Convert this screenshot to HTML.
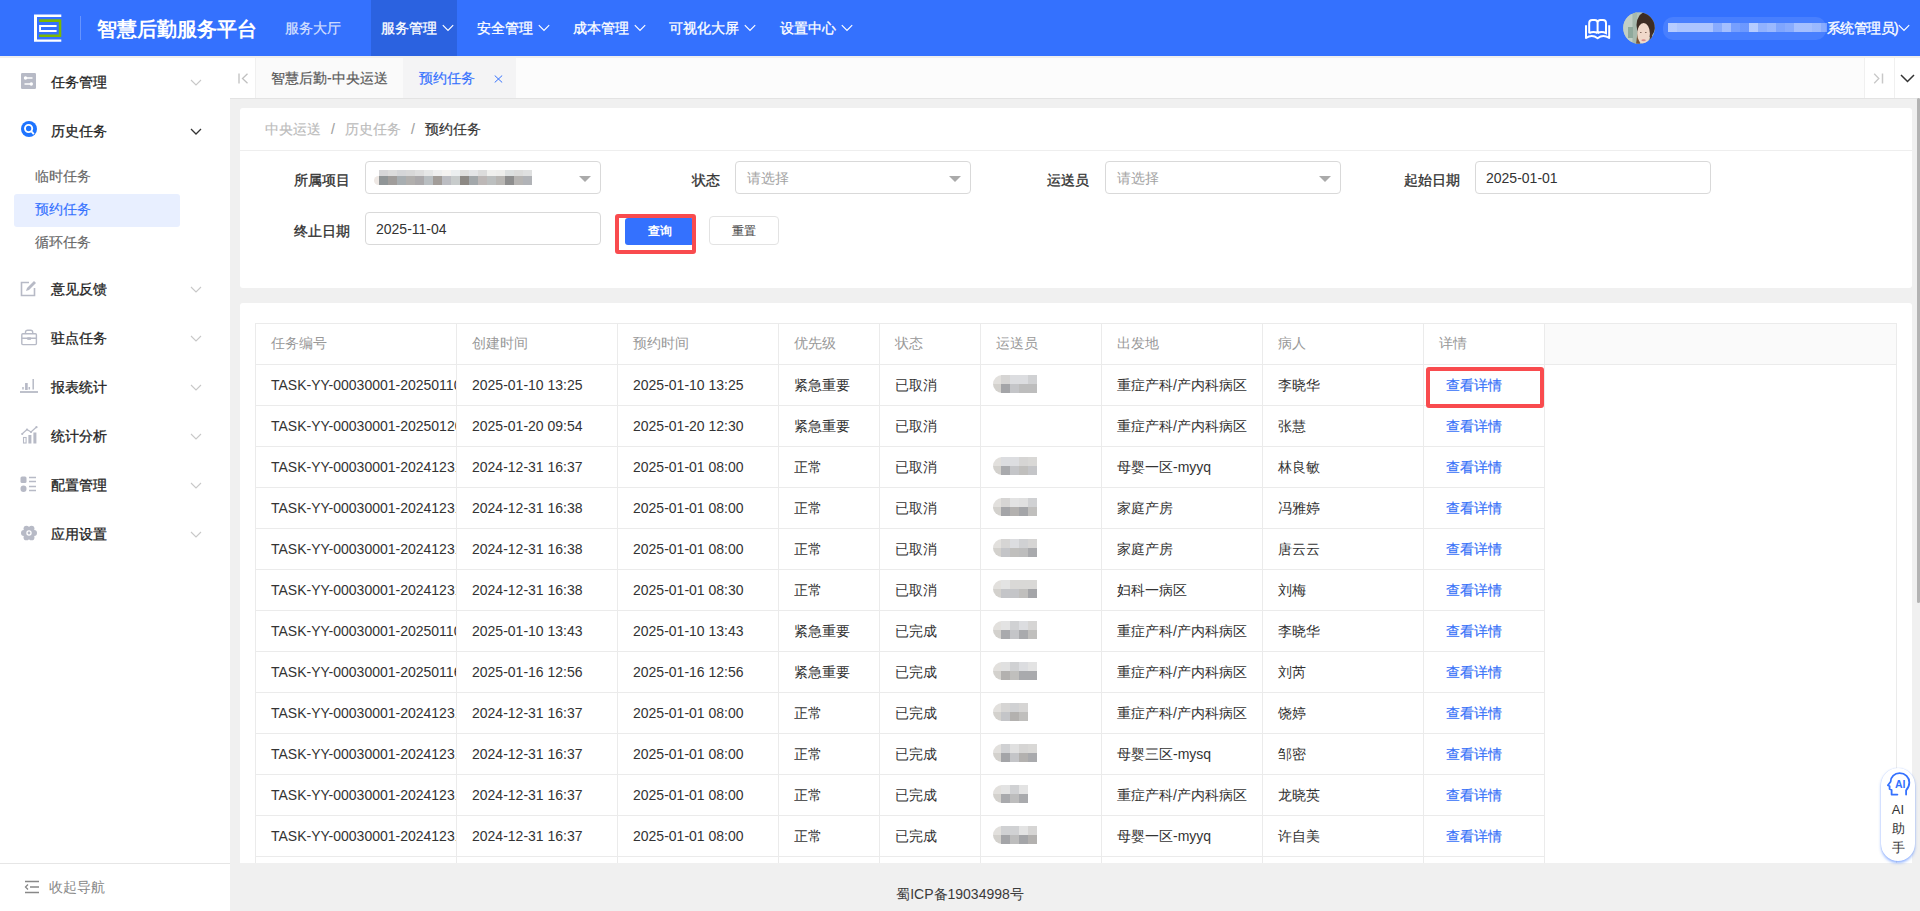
<!DOCTYPE html>
<html><head><meta charset="utf-8">
<style>
*{margin:0;padding:0;box-sizing:border-box}
html,body{width:1920px;height:911px;overflow:hidden;background:#f0f0f0;font-family:"Liberation Sans",sans-serif;color:#333}
.abs{position:absolute}
#hdr{position:absolute;left:0;top:0;width:1920px;height:56px;background:#3471fe}
#hdr .title{position:absolute;left:97px;top:15px;font-size:19.6px;color:#fff;line-height:28px;font-weight:bold}
#hdr .nav{position:absolute;top:0;height:56px;line-height:56px;font-size:14px;color:#fff;-webkit-text-stroke:0.3px #fff}
#hdr .nav svg{vertical-align:middle;margin-left:5px;margin-top:-3px}
#side{position:absolute;left:0;top:56px;width:230px;height:855px;background:#fff}
.mi{position:absolute;left:0;width:230px;height:30px;line-height:30px;font-size:14px;color:#1f1f1f;-webkit-text-stroke:0.3px #1f1f1f}
.mi .t{position:absolute;left:51px;top:1px}
.mi .ic{position:absolute;left:20px;top:7px}
.mi .ch{position:absolute;left:190px;top:13px}
.si{position:absolute;left:35px;font-size:14px;color:#666;line-height:20px;-webkit-text-stroke:0.15px #666}
#tabs{position:absolute;left:230px;top:58px;width:1690px;height:40px;background:#fcfcfc;box-shadow:0 1px 0 #e3e3e3}
#hdrsh{position:absolute;left:0;top:56px;width:1920px;height:2px;background:#efefef;z-index:5}
.card{position:absolute;background:#fff;border-radius:3px}
.lbl{position:absolute;font-size:14px;color:#333;line-height:20px;text-align:right;-webkit-text-stroke:0.35px #333}
.inp{position:absolute;height:33px;border:1px solid #d9d9d9;border-radius:4px;background:#fff;font-size:14px;line-height:31px;padding-left:10px;padding-top:1px;color:#333}
.inp.ph{padding-left:11px}
.inp.ph{color:#a3a3a3}
.inp .arr{position:absolute;right:9px;top:14px;width:0;height:0;border-left:6.5px solid transparent;border-right:6.5px solid transparent;border-top:6px solid #aaa}
table{border-collapse:collapse;table-layout:fixed}
td,th{border:1px solid #ebebeb;height:41px;font-size:14px;padding:0 0 0 15px;text-align:left;white-space:nowrap;overflow:hidden;font-weight:normal}
th{color:#999}
td{color:#333;padding-top:0}
td:nth-child(n+4){padding-top:2px}
.blur{display:inline-block;position:relative;width:44px;height:18px;vertical-align:middle;margin-left:-3px;top:-2px}.blur i{position:absolute}
td:last-child{border-top:0;border-bottom:0}
td a{color:#3570f8;text-decoration:none;-webkit-text-stroke:0.15px #3570f8}
</style></head><body>

<div id="hdr">
  <svg class="abs" style="left:0;top:0" width="100" height="56" viewBox="0 0 100 56">
    <path d="M34 14.4h27.3V17H37v22.6h24.3v2.2H34z" fill="#fff"/>
    <path d="M39.1 19.3h22.2v17.8H39.1v-2.7h19.7V22H39.1z" fill="#7cb800"/>
    <path d="M39.1 25h17.5v2H41v3h15.6v1.9H39.1z" fill="#fff"/>
  </svg>
  <div class="abs" style="left:80px;top:16px;width:1px;height:24px;background:rgba(255,255,255,.25)"></div>
  <div class="title">智慧后勤服务平台</div>
  <div class="nav" style="left:285px;color:rgba(255,255,255,.75);-webkit-text-stroke:0.3px rgba(255,255,255,.6)">服务大厅</div>
  <div class="abs" style="left:371px;top:0;width:86px;height:56px;background:#2b62e0"></div>
  <div class="nav" style="left:381px">服务管理<svg width="12" height="8" viewBox="0 0 12 8"><path d="M0.8 1.2l5.2 5.2 5.2-5.2" fill="none" stroke="#fff" stroke-width="1.2"/></svg></div>
  <div class="nav" style="left:477px">安全管理<svg width="12" height="8" viewBox="0 0 12 8"><path d="M0.8 1.2l5.2 5.2 5.2-5.2" fill="none" stroke="#fff" stroke-width="1.2"/></svg></div>
  <div class="nav" style="left:573px">成本管理<svg width="12" height="8" viewBox="0 0 12 8"><path d="M0.8 1.2l5.2 5.2 5.2-5.2" fill="none" stroke="#fff" stroke-width="1.2"/></svg></div>
  <div class="nav" style="left:669px">可视化大屏<svg width="12" height="8" viewBox="0 0 12 8"><path d="M0.8 1.2l5.2 5.2 5.2-5.2" fill="none" stroke="#fff" stroke-width="1.2"/></svg></div>
  <div class="nav" style="left:780px">设置中心<svg width="12" height="8" viewBox="0 0 12 8"><path d="M0.8 1.2l5.2 5.2 5.2-5.2" fill="none" stroke="#fff" stroke-width="1.2"/></svg></div>
  <!-- book -->
  <svg class="abs" style="left:1580px;top:9px" width="40" height="40" viewBox="0 0 40 40"><path d="M9.2 24.2V14a3 3 0 0 1 3-3h2.6a2.8 2.8 0 0 1 2.8 2.8V24.2M9.2 24.2Q13.4 22 17.6 24.2M17.6 24.2V13.8a2.8 2.8 0 0 1 2.8-2.8h2.6a3 3 0 0 1 3 3V24.2Q21.8 22 17.6 24.2" fill="none" stroke="#fff" stroke-width="2"/><path d="M6 16.2V29Q12 25 17.6 29.2Q23.2 25 29.2 29V16.2" fill="none" stroke="#fff" stroke-width="2" stroke-linejoin="round"/></svg>
  <svg class="abs" style="left:1623px;top:12px" width="32" height="32" viewBox="0 0 32 32"><defs><clipPath id="av"><circle cx="16" cy="16" r="15.8"/></clipPath></defs><g clip-path="url(#av)"><rect width="32" height="32" fill="#b3c3b8"/><rect x="0" y="0" width="9" height="32" fill="#c2cfc6"/><rect x="5" y="15" width="8" height="11" fill="#8fa99c"/><rect x="10" y="0" width="4" height="32" fill="#a7b9ad"/><ellipse cx="23" cy="13" rx="9.5" ry="13" fill="#3d2d24"/><path d="M15.5 14 L13 32 L17 32 Z" fill="#7a5638"/><path d="M28 18 L31 32 L26 32 Z" fill="#4a3428"/><ellipse cx="20.6" cy="21.5" rx="6.3" ry="10.5" fill="#f0d9ca"/><ellipse cx="20.6" cy="28.2" rx="2.2" ry="1" fill="#d88f8c"/><ellipse cx="17.8" cy="20.5" rx="0.9" ry="0.6" fill="#7a6052"/><ellipse cx="22.8" cy="20.5" rx="0.9" ry="0.6" fill="#7a6052"/></g></svg>
  <div class="abs" style="left:1663px;top:17px;width:163px;height:23px;background:rgba(255,255,255,.1);border-radius:10px"></div><div class="abs" style="left:1668px;top:23px;width:159px;height:9px;background:linear-gradient(90deg,rgba(255,255,255,0.60) 0px,rgba(255,255,255,0.60) 9px,rgba(255,255,255,0.55) 9px,rgba(255,255,255,0.55) 18px,rgba(255,255,255,0.55) 18px,rgba(255,255,255,0.55) 27px,rgba(255,255,255,0.55) 27px,rgba(255,255,255,0.55) 36px,rgba(255,255,255,0.55) 36px,rgba(255,255,255,0.55) 45px,rgba(255,255,255,0.35) 45px,rgba(255,255,255,0.35) 54px,rgba(255,255,255,0.50) 54px,rgba(255,255,255,0.50) 63px,rgba(255,255,255,0.25) 63px,rgba(255,255,255,0.25) 72px,rgba(255,255,255,0.20) 72px,rgba(255,255,255,0.20) 81px,rgba(255,255,255,0.60) 81px,rgba(255,255,255,0.60) 90px,rgba(255,255,255,0.40) 90px,rgba(255,255,255,0.40) 99px,rgba(255,255,255,0.45) 99px,rgba(255,255,255,0.45) 108px,rgba(255,255,255,0.30) 108px,rgba(255,255,255,0.30) 117px,rgba(255,255,255,0.35) 117px,rgba(255,255,255,0.35) 126px,rgba(255,255,255,0.50) 126px,rgba(255,255,255,0.50) 135px,rgba(255,255,255,0.50) 135px,rgba(255,255,255,0.50) 144px,rgba(255,255,255,0.45) 144px,rgba(255,255,255,0.45) 153px,rgba(255,255,255,0.35) 153px,rgba(255,255,255,0.35) 162px)"></div>
  <div class="nav" style="left:1827px;letter-spacing:-0.6px">系统管理员)<svg style="margin-left:0" width="12" height="8" viewBox="0 0 12 8"><path d="M0.8 1.2l5.2 5.2 5.2-5.2" fill="none" stroke="#fff" stroke-width="1.2"/></svg></div>
</div>

<div id="hdrsh"></div>
<div id="side">
  <div class="mi" style="top:10px"><svg class="ic" style="left:21px" width="15" height="16" viewBox="0 0 15 16"><rect x="0" y="0" width="15" height="16" rx="1.2" fill="#b7bac6"/><path d="M4 5h7.5M3.5 11h7" stroke="#fff" stroke-width="1.3"/><circle cx="4.5" cy="5" r="1.7" fill="#fff"/><circle cx="10.3" cy="11" r="1.7" fill="#fff"/></svg><span class="t">任务管理</span><svg class="ch" width="12" height="7" viewBox="0 0 12 7"><path d="M1 1l5 5 5-5" fill="none" stroke="#c8c8c8" stroke-width="1.1"/></svg></div>
  <div class="mi" style="top:59px"><svg class="ic" style="left:21px;top:6px" width="16" height="16" viewBox="0 0 16 16"><circle cx="8" cy="8" r="8" fill="#1e74ff"/><circle cx="7.6" cy="7.5" r="3.6" fill="none" stroke="#fff" stroke-width="1.9"/><path d="M10.2 10.2l2.6 3" stroke="#fff" stroke-width="1.8"/></svg><span class="t">历史任务</span><svg class="ch" width="12" height="7" viewBox="0 0 12 7"><path d="M1 1l5 5 5-5" fill="none" stroke="#333" stroke-width="1.3"/></svg></div>
  <div class="si" style="top:110px">临时任务</div>
  <div class="abs" style="left:14px;top:138px;width:166px;height:33px;background:#e8efff;border-radius:3px"></div>
  <div class="si" style="top:143px;color:#3471fe;-webkit-text-stroke:0.15px #3471fe">预约任务</div>
  <div class="si" style="top:176px">循环任务</div>
  <div class="mi" style="top:217px"><svg class="ic" width="17" height="17" viewBox="0 0 17 17"><path d="M9 2.5H1.5v13h13V8" fill="none" stroke="#b7bac6" stroke-width="1.6"/><path d="M6 11l1-3 7-7 2 2-7 7z" fill="#b7bac6"/></svg><span class="t">意见反馈</span><svg class="ch" width="12" height="7" viewBox="0 0 12 7"><path d="M1 1l5 5 5-5" fill="none" stroke="#c8c8c8" stroke-width="1.1"/></svg></div>
  <div class="mi" style="top:266px"><svg class="ic" style="left:21px;top:7px" width="17" height="17" viewBox="0 0 17 17"><rect x="0.8" y="4.8" width="14.6" height="10.8" rx="1" fill="none" stroke="#b7bac6" stroke-width="1.4"/><path d="M4.5 4.8V3.2a2 2 0 0 1 2-2h3.2a2 2 0 0 1 2 2v1.6M0.8 9.2h14.6" fill="none" stroke="#b7bac6" stroke-width="1.4"/><rect x="6.3" y="8.3" width="3.6" height="2.6" fill="#b7bac6"/></svg><span class="t">驻点任务</span><svg class="ch" width="12" height="7" viewBox="0 0 12 7"><path d="M1 1l5 5 5-5" fill="none" stroke="#c8c8c8" stroke-width="1.1"/></svg></div>
  <div class="mi" style="top:315px"><svg class="ic" style="left:20px;top:5px" width="18" height="17" viewBox="0 0 18 17"><path d="M0 16h18" stroke="#b7bac6" stroke-width="1.8"/><path d="M3 13.5V11M6.3 13.5V7.5M9.3 13.5V11M13.2 13.5V3" stroke="#b7bac6" stroke-width="1.5"/><rect x="5.6" y="7.5" width="1.6" height="6" fill="none" stroke="#b7bac6" stroke-width="1"/></svg><span class="t">报表统计</span><svg class="ch" width="12" height="7" viewBox="0 0 12 7"><path d="M1 1l5 5 5-5" fill="none" stroke="#c8c8c8" stroke-width="1.1"/></svg></div>
  <div class="mi" style="top:364px"><svg class="ic" style="left:21px;top:6px" width="17" height="18" viewBox="0 0 17 18"><path d="M1 8l5-4.5 4 2.5 5.5-5" fill="none" stroke="#b7bac6" stroke-width="1.2"/><circle cx="1.2" cy="8" r="1.1" fill="#b7bac6"/><circle cx="6" cy="3.5" r="1.1" fill="#b7bac6"/><circle cx="10" cy="6" r="1.1" fill="#b7bac6"/><circle cx="15.5" cy="1.2" r="1.1" fill="#b7bac6"/><rect x="2.5" y="11.5" width="2.6" height="5.5" fill="none" stroke="#b7bac6" stroke-width="1.1"/><rect x="7.4" y="9" width="3" height="8.5" fill="#b7bac6"/><rect x="12.4" y="6.5" width="3" height="11" fill="#b7bac6"/></svg><span class="t">统计分析</span><svg class="ch" width="12" height="7" viewBox="0 0 12 7"><path d="M1 1l5 5 5-5" fill="none" stroke="#c8c8c8" stroke-width="1.1"/></svg></div>
  <div class="mi" style="top:413px"><svg class="ic" width="17" height="17" viewBox="0 0 17 17"><rect x="0.5" y="0.5" width="6" height="6.5" rx="1.5" fill="#b7bac6"/><rect x="0.5" y="9.5" width="6" height="6.5" rx="3" fill="#b7bac6"/><path d="M9 1.5h7M9 5.5h7M9 10.5h7M9 14.5h7" stroke="#b7bac6" stroke-width="1.6"/></svg><span class="t">配置管理</span><svg class="ch" width="12" height="7" viewBox="0 0 12 7"><path d="M1 1l5 5 5-5" fill="none" stroke="#c8c8c8" stroke-width="1.1"/></svg></div>
  <div class="mi" style="top:462px"><svg class="ic" style="left:21px;top:7px" width="16" height="16" viewBox="0 0 16 16"><circle cx="8" cy="8" r="5.6" fill="#b7bac6"/><circle cx="13.10" cy="8.00" r="2.9" fill="#b7bac6"/><circle cx="10.55" cy="12.42" r="2.9" fill="#b7bac6"/><circle cx="5.45" cy="12.42" r="2.9" fill="#b7bac6"/><circle cx="2.90" cy="8.00" r="2.9" fill="#b7bac6"/><circle cx="5.45" cy="3.58" r="2.9" fill="#b7bac6"/><circle cx="10.55" cy="3.58" r="2.9" fill="#b7bac6"/><circle cx="8" cy="8" r="2.7" fill="#fff"/><circle cx="8" cy="8" r="1.4" fill="#b7bac6"/></svg><span class="t">应用设置</span><svg class="ch" width="12" height="7" viewBox="0 0 12 7"><path d="M1 1l5 5 5-5" fill="none" stroke="#c8c8c8" stroke-width="1.1"/></svg></div>
  <div class="abs" style="left:0;top:807px;width:230px;height:1px;background:#e6e6e6"></div>
  <svg class="abs" style="left:24px;top:824px" width="16" height="14" viewBox="0 0 16 14"><path d="M1 1.5h14M6 7h9M1 12.5h14" stroke="#888" stroke-width="1.5"/><path d="M4 4.5L1.5 7 4 9.5" fill="none" stroke="#888" stroke-width="1.3"/></svg>
  <div class="abs" style="left:49px;top:821px;font-size:14px;color:#888;line-height:20px">收起导航</div>
</div>

<div id="tabs">
  <div class="abs" style="left:0;top:0;width:26px;height:40px;background:#fff;border-right:1px solid #f0f0f0"></div>
  <div class="abs" style="left:26px;top:0;width:147px;height:40px;background:#fafafa"></div>
  <svg class="abs" style="left:8px;top:15px" width="11" height="11" viewBox="0 0 11 11"><path d="M1 0.5v10" stroke="#c0c0c0" stroke-width="1.3"/><path d="M9.5 0.8L4.5 5.5l5 4.7" fill="none" stroke="#c0c0c0" stroke-width="1.3"/></svg>
  <div class="abs" style="left:41px;top:10px;font-size:14px;color:#595959;line-height:20px;-webkit-text-stroke:0.2px #595959">智慧后勤-中央运送</div>
  <div class="abs" style="left:173px;top:0;width:113px;height:40px;background:#f4f4f5"></div>
  <div class="abs" style="left:189px;top:10px;font-size:14px;color:#3471fe;line-height:20px;-webkit-text-stroke:0.2px #3471fe">预约任务</div>
  <svg class="abs" style="left:264px;top:17px" width="9" height="8" viewBox="0 0 9 8"><path d="M0.7 0.5l7.5 7M8.2 0.5L0.7 7.5" stroke="#3471fe" stroke-width="1"/></svg>
  <div class="abs" style="left:1634px;top:0;width:31px;height:40px;background:#fff;border-left:1px solid #f0f0f0;border-right:1px solid #f0f0f0"></div>
  <div class="abs" style="left:1665px;top:0;width:25px;height:40px;background:#fff"></div>
  <svg class="abs" style="left:1643px;top:15px" width="11" height="11" viewBox="0 0 11 11"><path d="M9.5 0.5v10" stroke="#c8c8c8" stroke-width="1.5"/><path d="M1.2 0.8L5.8 5.5l-4.6 4.7" fill="none" stroke="#c8c8c8" stroke-width="1.3"/></svg>
  <svg class="abs" style="left:1670px;top:16px" width="15" height="9" viewBox="0 0 15 9"><path d="M1 1l6.5 6.5L14 1" fill="none" stroke="#333" stroke-width="1.5"/></svg>
</div>

<div class="card" style="left:240px;top:108px;width:1672px;height:180px">
  <div class="abs" style="left:25px;top:11px;font-size:14px;line-height:20px;color:#bbb;-webkit-text-stroke:0.15px #bbb">中央运送<span style="margin:0 10px;color:#999">/</span>历史任务<span style="margin:0 10px;color:#999">/</span><span style="color:#333;-webkit-text-stroke:0.2px #333">预约任务</span></div>
  <div class="abs" style="left:0;top:42px;width:1672px;height:1px;background:#eee"></div>
  <div class="lbl" style="left:40px;top:62px;width:70px">所属项目</div>
  <div class="inp" style="left:125px;top:53px;width:236px"><div class="abs" style="left:13px;top:8px;width:153px;height:6px;background:linear-gradient(90deg,#d6d6d8 0px,#d6d6d8 9px,#dcdcdc 9px,#dcdcdc 18px,#d5d6d8 18px,#d5d6d8 27px,#d8d8d8 27px,#d8d8d8 36px,#dedede 36px,#dedede 45px,#e6e7e7 45px,#e6e7e7 54px,#efefef 54px,#efefef 63px,#f5f3f1 63px,#f5f3f1 72px,#eceff0 72px,#eceff0 81px,#e0dfdd 81px,#e0dfdd 90px,#e4e5e7 90px,#e4e5e7 99px,#dcdcdc 99px,#dcdcdc 108px,#f0f0ee 108px,#f0f0ee 117px,#eeeeec 117px,#eeeeec 126px,#dde0e0 126px,#dde0e0 135px,#dcdcdb 135px,#dcdcdb 144px,#dfe0e0 144px,#dfe0e0 153px)"></div><div class="abs" style="left:13px;top:14px;width:153px;height:9px;background:linear-gradient(90deg,#909597 0px,#909597 9px,#a09d9b 9px,#a09d9b 18px,#a8aeb1 18px,#a8aeb1 27px,#b1afad 27px,#b1afad 36px,#aba9ab 36px,#aba9ab 45px,#b9bec1 45px,#b9bec1 54px,#a29d99 54px,#a29d99 63px,#bcbdc2 63px,#bcbdc2 72px,#c8cccc 72px,#c8cccc 81px,#8d8984 81px,#8d8984 90px,#a3a8ab 90px,#a3a8ab 99px,#bdb8b7 99px,#bdb8b7 108px,#bcbfbf 108px,#bcbfbf 117px,#b8b6b3 117px,#b8b6b3 126px,#8e8e8e 126px,#8e8e8e 135px,#b6b4b2 135px,#b6b4b2 144px,#b1b3b7 144px,#b1b3b7 153px)"></div><div class="abs" style="left:8px;top:14px;width:5px;height:9px;background:#eee8e4;border-radius:5px 0 0 5px"></div><div class="arr"></div></div>
  <div class="lbl" style="left:410px;top:62px;width:70px">状态</div>
  <div class="inp ph" style="left:495px;top:53px;width:236px">请选择<div class="arr"></div></div>
  <div class="lbl" style="left:779px;top:62px;width:70px">运送员</div>
  <div class="inp ph" style="left:865px;top:53px;width:236px">请选择<div class="arr"></div></div>
  <div class="lbl" style="left:1150px;top:62px;width:70px">起始日期</div>
  <div class="inp" style="left:1235px;top:53px;width:236px">2025-01-01</div>
  <div class="lbl" style="left:40px;top:113px;width:70px">终止日期</div>
  <div class="inp" style="left:125px;top:104px;width:236px">2025-11-04</div>
  <div class="abs" style="left:385px;top:110px;width:69px;height:27px;background:#3471fe;border-radius:3px;color:#fff;font-size:12px;line-height:27px;text-align:center;font-weight:bold">查询</div>
  <div class="abs" style="left:375px;top:106px;width:81px;height:40px;border:4px solid #f94b4e;border-radius:3px"></div>
  <div class="abs" style="left:469px;top:108px;width:70px;height:29px;border:1px solid #e3e3e3;border-radius:4px;background:#fff;color:#505050;font-size:12px;line-height:29px;text-align:center;-webkit-text-stroke:0.15px #505050">重置</div>
</div>

<div class="card" style="left:240px;top:303px;width:1672px;height:560px;overflow:hidden;border-radius:3px 3px 0 0">
<table class="abs" style="left:15px;top:20px;width:1641px">
<colgroup><col style="width:201px"><col style="width:161px"><col style="width:161px"><col style="width:101px"><col style="width:101px"><col style="width:121px"><col style="width:161px"><col style="width:161px"><col style="width:121px"><col style="width:352px"></colgroup>
<tr><th>任务编号</th><th>创建时间</th><th>预约时间</th><th>优先级</th><th>状态</th><th>运送员</th><th>出发地</th><th>病人</th><th>详情</th><th style="background:#fafafa"></th></tr>
<tr><td style="padding-right:0">TASK-YY-00030001-20250110</td><td>2025-01-10 13:25</td><td>2025-01-10 13:25</td><td>紧急重要</td><td>已取消</td><td><span class="blur"><i style="left:0;top:0;width:9px;height:9px;background:#e2e0dd;border-top-left-radius:9px"></i><i style="left:0;top:9px;width:9px;height:9px;background:#d3d1cd;border-bottom-left-radius:9px"></i><i style="left:8px;top:0;width:9px;height:9px;background:#d6d5d4"></i><i style="left:8px;top:9px;width:9px;height:9px;background:#a4a5a8"></i><i style="left:17px;top:0;width:9px;height:9px;background:#dcdde0"></i><i style="left:17px;top:9px;width:9px;height:9px;background:#c4c5c8"></i><i style="left:26px;top:0;width:9px;height:9px;background:#dcdde0"></i><i style="left:26px;top:9px;width:9px;height:9px;background:#bdbdbd"></i><i style="left:35px;top:0;width:9px;height:9px;background:#d0d1d3"></i><i style="left:35px;top:9px;width:9px;height:9px;background:#bdbdbd"></i></span></td><td>重症产科/产内科病区</td><td>李晓华</td><td style="padding-left:22px"><a>查看详情</a></td><td></td></tr>
<tr><td style="padding-right:0">TASK-YY-00030001-20250120</td><td>2025-01-20 09:54</td><td>2025-01-20 12:30</td><td>紧急重要</td><td>已取消</td><td></td><td>重症产科/产内科病区</td><td>张慧</td><td style="padding-left:22px"><a>查看详情</a></td><td></td></tr>
<tr><td style="padding-right:0">TASK-YY-00030001-20241231</td><td>2024-12-31 16:37</td><td>2025-01-01 08:00</td><td>正常</td><td>已取消</td><td><span class="blur"><i style="left:0;top:0;width:9px;height:9px;background:#e2e0dd;border-top-left-radius:9px"></i><i style="left:0;top:9px;width:9px;height:9px;background:#d3d1cd;border-bottom-left-radius:9px"></i><i style="left:8px;top:0;width:9px;height:9px;background:#dcdde0"></i><i style="left:8px;top:9px;width:9px;height:9px;background:#a9aaad"></i><i style="left:17px;top:0;width:9px;height:9px;background:#dcdde0"></i><i style="left:17px;top:9px;width:9px;height:9px;background:#c4c5c8"></i><i style="left:26px;top:0;width:9px;height:9px;background:#d6d5d4"></i><i style="left:26px;top:9px;width:9px;height:9px;background:#c0bfbd"></i><i style="left:35px;top:0;width:9px;height:9px;background:#d9d8d6"></i><i style="left:35px;top:9px;width:9px;height:9px;background:#c4c5c8"></i></span></td><td>母婴一区-myyq</td><td>林良敏</td><td style="padding-left:22px"><a>查看详情</a></td><td></td></tr>
<tr><td style="padding-right:0">TASK-YY-00030001-20241231</td><td>2024-12-31 16:38</td><td>2025-01-01 08:00</td><td>正常</td><td>已取消</td><td><span class="blur"><i style="left:0;top:0;width:9px;height:9px;background:#e2e0dd;border-top-left-radius:9px"></i><i style="left:0;top:9px;width:9px;height:9px;background:#d3d1cd;border-bottom-left-radius:9px"></i><i style="left:8px;top:0;width:9px;height:9px;background:#d6d5d4"></i><i style="left:8px;top:9px;width:9px;height:9px;background:#a4a5a8"></i><i style="left:17px;top:0;width:9px;height:9px;background:#e3e3e3"></i><i style="left:17px;top:9px;width:9px;height:9px;background:#b3b1af"></i><i style="left:26px;top:0;width:9px;height:9px;background:#e0e0e0"></i><i style="left:26px;top:9px;width:9px;height:9px;background:#a4a5a8"></i><i style="left:35px;top:0;width:9px;height:9px;background:#d0d1d3"></i><i style="left:35px;top:9px;width:9px;height:9px;background:#c0bfbd"></i></span></td><td>家庭产房</td><td>冯雅婷</td><td style="padding-left:22px"><a>查看详情</a></td><td></td></tr>
<tr><td style="padding-right:0">TASK-YY-00030001-20241231</td><td>2024-12-31 16:38</td><td>2025-01-01 08:00</td><td>正常</td><td>已取消</td><td><span class="blur"><i style="left:0;top:0;width:9px;height:9px;background:#e2e0dd;border-top-left-radius:9px"></i><i style="left:0;top:9px;width:9px;height:9px;background:#d3d1cd;border-bottom-left-radius:9px"></i><i style="left:8px;top:0;width:9px;height:9px;background:#d6d5d4"></i><i style="left:8px;top:9px;width:9px;height:9px;background:#c4c5c8"></i><i style="left:17px;top:0;width:9px;height:9px;background:#dcdde0"></i><i style="left:17px;top:9px;width:9px;height:9px;background:#c0bfbd"></i><i style="left:26px;top:0;width:9px;height:9px;background:#d0d1d3"></i><i style="left:26px;top:9px;width:9px;height:9px;background:#bdbdbd"></i><i style="left:35px;top:0;width:9px;height:9px;background:#d6d5d4"></i><i style="left:35px;top:9px;width:9px;height:9px;background:#a9aaad"></i></span></td><td>家庭产房</td><td>唐云云</td><td style="padding-left:22px"><a>查看详情</a></td><td></td></tr>
<tr><td style="padding-right:0">TASK-YY-00030001-20241231</td><td>2024-12-31 16:38</td><td>2025-01-01 08:30</td><td>正常</td><td>已取消</td><td><span class="blur"><i style="left:0;top:0;width:9px;height:9px;background:#e2e0dd;border-top-left-radius:9px"></i><i style="left:0;top:9px;width:9px;height:9px;background:#d3d1cd;border-bottom-left-radius:9px"></i><i style="left:8px;top:0;width:9px;height:9px;background:#e3e3e3"></i><i style="left:8px;top:9px;width:9px;height:9px;background:#c4c5c8"></i><i style="left:17px;top:0;width:9px;height:9px;background:#d9d8d6"></i><i style="left:17px;top:9px;width:9px;height:9px;background:#c4c5c8"></i><i style="left:26px;top:0;width:9px;height:9px;background:#d9d8d6"></i><i style="left:26px;top:9px;width:9px;height:9px;background:#c0bfbd"></i><i style="left:35px;top:0;width:9px;height:9px;background:#d9d8d6"></i><i style="left:35px;top:9px;width:9px;height:9px;background:#a4a5a8"></i></span></td><td>妇科一病区</td><td>刘梅</td><td style="padding-left:22px"><a>查看详情</a></td><td></td></tr>
<tr><td style="padding-right:0">TASK-YY-00030001-20250110</td><td>2025-01-10 13:43</td><td>2025-01-10 13:43</td><td>紧急重要</td><td>已完成</td><td><span class="blur"><i style="left:0;top:0;width:9px;height:9px;background:#e2e0dd;border-top-left-radius:9px"></i><i style="left:0;top:9px;width:9px;height:9px;background:#d3d1cd;border-bottom-left-radius:9px"></i><i style="left:8px;top:0;width:9px;height:9px;background:#e3e3e3"></i><i style="left:8px;top:9px;width:9px;height:9px;background:#a9aaad"></i><i style="left:17px;top:0;width:9px;height:9px;background:#d0d1d3"></i><i style="left:17px;top:9px;width:9px;height:9px;background:#c4c5c8"></i><i style="left:26px;top:0;width:9px;height:9px;background:#dcdde0"></i><i style="left:26px;top:9px;width:9px;height:9px;background:#a9aaad"></i><i style="left:35px;top:0;width:9px;height:9px;background:#d6d5d4"></i><i style="left:35px;top:9px;width:9px;height:9px;background:#c0bfbd"></i></span></td><td>重症产科/产内科病区</td><td>李晓华</td><td style="padding-left:22px"><a>查看详情</a></td><td></td></tr>
<tr><td style="padding-right:0">TASK-YY-00030001-20250116</td><td>2025-01-16 12:56</td><td>2025-01-16 12:56</td><td>紧急重要</td><td>已完成</td><td><span class="blur"><i style="left:0;top:0;width:9px;height:9px;background:#e2e0dd;border-top-left-radius:9px"></i><i style="left:0;top:9px;width:9px;height:9px;background:#d3d1cd;border-bottom-left-radius:9px"></i><i style="left:8px;top:0;width:9px;height:9px;background:#e0e0e0"></i><i style="left:8px;top:9px;width:9px;height:9px;background:#b3b1af"></i><i style="left:17px;top:0;width:9px;height:9px;background:#d0d1d3"></i><i style="left:17px;top:9px;width:9px;height:9px;background:#c0bfbd"></i><i style="left:26px;top:0;width:9px;height:9px;background:#dcdde0"></i><i style="left:26px;top:9px;width:9px;height:9px;background:#a9aaad"></i><i style="left:35px;top:0;width:9px;height:9px;background:#e3e3e3"></i><i style="left:35px;top:9px;width:9px;height:9px;background:#a9aaad"></i></span></td><td>重症产科/产内科病区</td><td>刘芮</td><td style="padding-left:22px"><a>查看详情</a></td><td></td></tr>
<tr><td style="padding-right:0">TASK-YY-00030001-20241231</td><td>2024-12-31 16:37</td><td>2025-01-01 08:00</td><td>正常</td><td>已完成</td><td><span class="blur" style="width:35px"><i style="left:0;top:0;width:9px;height:9px;background:#e2e0dd;border-top-left-radius:9px"></i><i style="left:0;top:9px;width:9px;height:9px;background:#d3d1cd;border-bottom-left-radius:9px"></i><i style="left:8px;top:0;width:9px;height:9px;background:#d6d5d4"></i><i style="left:8px;top:9px;width:9px;height:9px;background:#c4c5c8"></i><i style="left:17px;top:0;width:9px;height:9px;background:#d0d1d3"></i><i style="left:17px;top:9px;width:9px;height:9px;background:#b3b1af"></i><i style="left:26px;top:0;width:9px;height:9px;background:#d6d5d4"></i><i style="left:26px;top:9px;width:9px;height:9px;background:#c0bfbd"></i></span></td><td>重症产科/产内科病区</td><td>饶婷</td><td style="padding-left:22px"><a>查看详情</a></td><td></td></tr>
<tr><td style="padding-right:0">TASK-YY-00030001-20241231</td><td>2024-12-31 16:37</td><td>2025-01-01 08:00</td><td>正常</td><td>已完成</td><td><span class="blur"><i style="left:0;top:0;width:9px;height:9px;background:#e2e0dd;border-top-left-radius:9px"></i><i style="left:0;top:9px;width:9px;height:9px;background:#d3d1cd;border-bottom-left-radius:9px"></i><i style="left:8px;top:0;width:9px;height:9px;background:#d0d1d3"></i><i style="left:8px;top:9px;width:9px;height:9px;background:#a4a5a8"></i><i style="left:17px;top:0;width:9px;height:9px;background:#e0e0e0"></i><i style="left:17px;top:9px;width:9px;height:9px;background:#c4c5c8"></i><i style="left:26px;top:0;width:9px;height:9px;background:#d6d5d4"></i><i style="left:26px;top:9px;width:9px;height:9px;background:#b3b1af"></i><i style="left:35px;top:0;width:9px;height:9px;background:#d9d8d6"></i><i style="left:35px;top:9px;width:9px;height:9px;background:#a9aaad"></i></span></td><td>母婴三区-mysq</td><td>邹密</td><td style="padding-left:22px"><a>查看详情</a></td><td></td></tr>
<tr><td style="padding-right:0">TASK-YY-00030001-20241231</td><td>2024-12-31 16:37</td><td>2025-01-01 08:00</td><td>正常</td><td>已完成</td><td><span class="blur" style="width:35px"><i style="left:0;top:0;width:9px;height:9px;background:#e2e0dd;border-top-left-radius:9px"></i><i style="left:0;top:9px;width:9px;height:9px;background:#d3d1cd;border-bottom-left-radius:9px"></i><i style="left:8px;top:0;width:9px;height:9px;background:#e3e3e3"></i><i style="left:8px;top:9px;width:9px;height:9px;background:#a9aaad"></i><i style="left:17px;top:0;width:9px;height:9px;background:#d0d1d3"></i><i style="left:17px;top:9px;width:9px;height:9px;background:#bdbdbd"></i><i style="left:26px;top:0;width:9px;height:9px;background:#e3e3e3"></i><i style="left:26px;top:9px;width:9px;height:9px;background:#a9aaad"></i></span></td><td>重症产科/产内科病区</td><td>龙晓英</td><td style="padding-left:22px"><a>查看详情</a></td><td></td></tr>
<tr><td style="padding-right:0">TASK-YY-00030001-20241231</td><td>2024-12-31 16:37</td><td>2025-01-01 08:00</td><td>正常</td><td>已完成</td><td><span class="blur"><i style="left:0;top:0;width:9px;height:9px;background:#e2e0dd;border-top-left-radius:9px"></i><i style="left:0;top:9px;width:9px;height:9px;background:#d3d1cd;border-bottom-left-radius:9px"></i><i style="left:8px;top:0;width:9px;height:9px;background:#d0d1d3"></i><i style="left:8px;top:9px;width:9px;height:9px;background:#a4a5a8"></i><i style="left:17px;top:0;width:9px;height:9px;background:#d0d1d3"></i><i style="left:17px;top:9px;width:9px;height:9px;background:#bdbdbd"></i><i style="left:26px;top:0;width:9px;height:9px;background:#e3e3e3"></i><i style="left:26px;top:9px;width:9px;height:9px;background:#a4a5a8"></i><i style="left:35px;top:0;width:9px;height:9px;background:#d6d5d4"></i><i style="left:35px;top:9px;width:9px;height:9px;background:#b3b1af"></i></span></td><td>母婴一区-myyq</td><td>许自美</td><td style="padding-left:22px"><a>查看详情</a></td><td></td></tr>
<tr><td style="padding-right:0">TASK-YY-00030001-20241231</td><td>2024-12-31 16:37</td><td>2025-01-01 08:00</td><td>正常</td><td>已完成</td><td><span class="blur"><i style="left:0;top:0;width:9px;height:9px;background:#e2e0dd;border-top-left-radius:9px"></i><i style="left:0;top:9px;width:9px;height:9px;background:#d3d1cd;border-bottom-left-radius:9px"></i><i style="left:8px;top:0;width:9px;height:9px;background:#d0d1d3"></i><i style="left:8px;top:9px;width:9px;height:9px;background:#c4c5c8"></i><i style="left:17px;top:0;width:9px;height:9px;background:#d9d8d6"></i><i style="left:17px;top:9px;width:9px;height:9px;background:#a4a5a8"></i><i style="left:26px;top:0;width:9px;height:9px;background:#d9d8d6"></i><i style="left:26px;top:9px;width:9px;height:9px;background:#c4c5c8"></i><i style="left:35px;top:0;width:9px;height:9px;background:#d6d5d4"></i><i style="left:35px;top:9px;width:9px;height:9px;background:#bdbdbd"></i></span></td><td>母婴一区-myyq</td><td>许自美</td><td style="padding-left:22px"><a>查看详情</a></td><td></td></tr>
</table>
  <div class="abs" style="left:1186px;top:64px;width:118px;height:41px;border:4px solid #f94b4e;border-radius:3px"></div>
</div>

<div class="abs" style="left:0;top:864px;width:1920px;height:48px;text-align:center;font-size:14px;line-height:60px;color:#3a3a3a">蜀ICP备19034998号</div>

<div class="abs" style="left:1917px;top:98px;width:3px;height:505px;background:#b3b3b3;border-radius:1.5px"></div>
<div class="abs" style="left:1881px;top:768px;width:34px;height:93px;border-radius:17px;background:#fff;box-shadow:0 0 1px 0 rgba(52,113,254,.35),0 2px 3px 0 rgba(52,113,254,.5)">
  <svg class="abs" style="left:6px;top:4px" width="24" height="25" viewBox="0 0 24 25"><path d="M10.4 22.6H4.6V18L2.6 17V14.2L0.9 13.2L3.6 9.8C3.6 4.8 7.6 1.1 12.6 1.1C18.2 1.1 22.3 5.3 22.3 10.4C22.3 14.1 20.6 16.6 19.1 18.3V22.6" fill="none" stroke="#3471fe" stroke-width="1.8" stroke-linejoin="round" stroke-linecap="round"/><text x="13.2" y="15.6" font-family="Liberation Sans" font-weight="bold" font-size="10.5" fill="#3471fe" text-anchor="middle">AI</text></svg>
  <div class="abs" style="left:0;top:32px;width:34px;text-align:center;font-size:13px;line-height:19px;color:#333">AI<br>助<br>手</div>
</div>
</body></html>
